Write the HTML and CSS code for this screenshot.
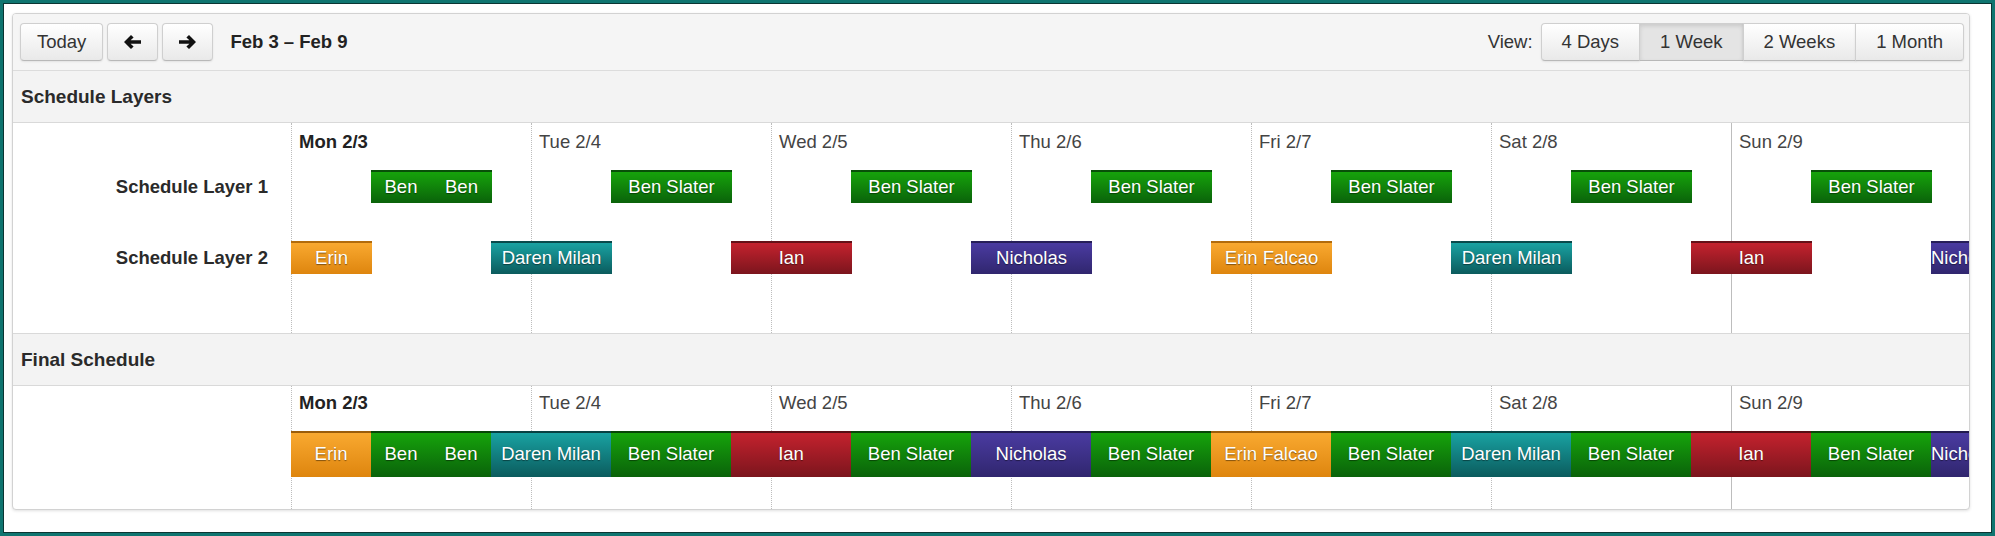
FILE: index.html
```html
<!DOCTYPE html>
<html lang="en">
<head>
<meta charset="utf-8">
<title>Schedule</title>
<link rel="stylesheet" href="styles.css">
</head>
<body>
<div class="frame">
  <div class="panel">
    <div class="toolbar">
      <div class="tb-left">
        <button class="btn btn-today">Today</button>
        <button class="btn btn-icon" aria-label="Previous">
          <svg width="17" height="14" viewBox="0 0 17 14"><path d="M0 7 L7 0 L9.6 2.6 L6.6 5.3 H17 V8.7 H6.6 L9.6 11.4 L7 14 Z" fill="#111"/></svg>
        </button>
        <button class="btn btn-icon" aria-label="Next">
          <svg width="17" height="14" viewBox="0 0 17 14"><path d="M17 7 L10 0 L7.4 2.6 L10.4 5.3 H0 V8.7 H10.4 L7.4 11.4 L10 14 Z" fill="#111"/></svg>
        </button>
        <span class="range">Feb 3 – Feb 9</span>
      </div>
      <div class="tb-right">
        <span class="view-label">View:</span>
        <div class="btn-group">
          <button class="btn">4 Days</button>
          <button class="btn active">1 Week</button>
          <button class="btn">2 Weeks</button>
          <button class="btn">1 Month</button>
        </div>
      </div>
    </div>

    <div class="section-head">Schedule Layers</div>
    <div class="sched sched-layers">
      <div class="labels">
        <div class="labels-head"></div>
        <div class="row-label">Schedule Layer 1</div>
        <div class="row-label">Schedule Layer 2</div>
      </div>
      <div class="timeline">
        <div class="days">
          <div class="day today">Mon 2/3</div>
          <div class="day">Tue 2/4</div>
          <div class="day">Wed 2/5</div>
          <div class="day">Thu 2/6</div>
          <div class="day">Fri 2/7</div>
          <div class="day">Sat 2/8</div>
          <div class="day now">Sun 2/9</div>
        </div>
        <div class="tracks">
          <div class="track">
            <div class="bar green" style="left:80px;width:60px">Ben</div>
            <div class="bar green" style="left:140px;width:61px">Ben</div>
            <div class="bar green" style="left:320px;width:121px">Ben Slater</div>
            <div class="bar green" style="left:560px;width:121px">Ben Slater</div>
            <div class="bar green" style="left:800px;width:121px">Ben Slater</div>
            <div class="bar green" style="left:1040px;width:121px">Ben Slater</div>
            <div class="bar green" style="left:1280px;width:121px">Ben Slater</div>
            <div class="bar green" style="left:1520px;width:121px">Ben Slater</div>
          </div>
          <div class="track">
            <div class="bar orange" style="left:0px;width:81px">Erin</div>
            <div class="bar teal" style="left:200px;width:121px">Daren Milan</div>
            <div class="bar red" style="left:440px;width:121px">Ian</div>
            <div class="bar purple" style="left:680px;width:121px">Nicholas</div>
            <div class="bar orange" style="left:920px;width:121px">Erin Falcao</div>
            <div class="bar teal" style="left:1160px;width:121px">Daren Milan</div>
            <div class="bar red" style="left:1400px;width:121px">Ian</div>
            <div class="bar purple" style="left:1640px;width:40px">Nicholas</div>
          </div>
        </div>
      </div>
    </div>

    <div class="section-head section-head-2">Final Schedule</div>
    <div class="sched sched-final">
      <div class="labels">
        <div class="labels-head"></div>
      </div>
      <div class="timeline">
        <div class="days">
          <div class="day today">Mon 2/3</div>
          <div class="day">Tue 2/4</div>
          <div class="day">Wed 2/5</div>
          <div class="day">Thu 2/6</div>
          <div class="day">Fri 2/7</div>
          <div class="day">Sat 2/8</div>
          <div class="day now">Sun 2/9</div>
        </div>
        <div class="tracks">
          <div class="track track-final">
            <div class="bar orange" style="left:0px;width:80px">Erin</div>
            <div class="bar green" style="left:80px;width:60px">Ben</div>
            <div class="bar green" style="left:140px;width:60px">Ben</div>
            <div class="bar teal" style="left:200px;width:120px">Daren Milan</div>
            <div class="bar green" style="left:320px;width:120px">Ben Slater</div>
            <div class="bar red" style="left:440px;width:120px">Ian</div>
            <div class="bar green" style="left:560px;width:120px">Ben Slater</div>
            <div class="bar purple" style="left:680px;width:120px">Nicholas</div>
            <div class="bar green" style="left:800px;width:120px">Ben Slater</div>
            <div class="bar orange" style="left:920px;width:120px">Erin Falcao</div>
            <div class="bar green" style="left:1040px;width:120px">Ben Slater</div>
            <div class="bar teal" style="left:1160px;width:120px">Daren Milan</div>
            <div class="bar green" style="left:1280px;width:120px">Ben Slater</div>
            <div class="bar red" style="left:1400px;width:120px">Ian</div>
            <div class="bar green" style="left:1520px;width:120px">Ben Slater</div>
            <div class="bar purple" style="left:1640px;width:40px">Nicholas</div>
          </div>
        </div>
      </div>
    </div>
  </div>
</div>
</body>
</html>
```

FILE: styles.css
```css
* { box-sizing: border-box; }

html, body {
  margin: 0;
  padding: 0;
  background: #ffffff;
}

body {
  font-family: "Liberation Sans", Arial, Helvetica, sans-serif;
  font-size: 18.5px;
  color: #333333;
}

.frame {
  width: 1995px;
  height: 536px;
  border: 3px solid #0f7570;
  box-shadow: inset 0 0 0 1px #0b3533;
  background: #ffffff;
  padding: 10px 0 0 9px;
  overflow: hidden;
}

.panel {
  width: 1958px;
  border: 1px solid #d2d2d2;
  border-radius: 4px;
  background: #ffffff;
  box-shadow: 0 1px 3px rgba(0, 0, 0, 0.12);
  overflow: hidden;
}

/* toolbar */
.toolbar {
  display: flex;
  align-items: center;
  justify-content: space-between;
  padding: 9px 5px 9px 7px;
  background: #f5f5f5;
  border-bottom: 1px solid #dcdcdc;
}

.tb-left, .tb-right {
  display: flex;
  align-items: center;
}

.tb-left { gap: 4px; }

.btn {
  height: 38px;
  margin: 0;
  padding: 0 20px;
  font-family: inherit;
  font-size: 18.5px;
  line-height: 36px;
  color: #333333;
  background: linear-gradient(#ffffff, #e9e9e9);
  border: 1px solid #cfcfcf;
  border-bottom-color: #b8b8b8;
  border-radius: 4px;
  box-shadow: inset 0 1px 0 rgba(255, 255, 255, 0.4), 0 1px 2px rgba(0, 0, 0, 0.08);
  display: flex;
  align-items: center;
  justify-content: center;
  cursor: pointer;
}

.btn-today { padding: 0 16px; }

.btn-icon {
  width: 51px;
  padding: 0;
}

.range {
  margin-left: 13px;
  font-weight: bold;
  font-size: 18.5px;
  color: #222222;
}

.view-label {
  margin-right: 8px;
  color: #333333;
}

.btn-group { display: flex; }

.btn-group .btn {
  border-radius: 0;
  margin-left: -1px;
}

.btn-group .btn:first-child {
  margin-left: 0;
  border-radius: 4px 0 0 4px;
}

.btn-group .btn:last-child {
  border-radius: 0 4px 4px 0;
}

.btn-group .btn.active {
  background: #e4e4e4;
  box-shadow: inset 0 2px 4px rgba(0, 0, 0, 0.12);
}

/* section headers */
.section-head {
  height: 52px;
  padding-left: 8px;
  display: flex;
  align-items: center;
  background: #f3f3f3;
  border-bottom: 1px solid #d9d9d9;
  font-weight: bold;
  font-size: 19px;
  color: #2a2a2a;
}

.section-head-2 {
  height: 53px;
  border-top: 1px solid #d9d9d9;
}

/* schedule bodies */
.sched {
  display: flex;
}

.sched-layers { height: 210px; }
.sched-final { height: 123px; }

.labels {
  width: 278px;
  flex: none;
}

.labels-head { height: 37px; }

.row-label {
  height: 71px;
  padding: 10px 23px 28px 0;
  display: flex;
  align-items: center;
  justify-content: flex-end;
  font-weight: bold;
  font-size: 18.5px;
  color: #2a2a2a;
  white-space: nowrap;
}

.timeline {
  position: relative;
  flex: 1;
  overflow: hidden;
}

.days {
  position: absolute;
  top: 0;
  bottom: 0;
  left: 0;
  display: grid;
  grid-template-columns: repeat(7, 240px);
}

.day {
  border-left: 1px dotted #bdbdbd;
  padding: 8px 0 0 7px;
  line-height: 22px;
  color: #444444;
  white-space: nowrap;
}

.sched-final .day { padding-top: 6px; }

.day.today {
  font-weight: bold;
  color: #222222;
}

.day.now {
  border-left: 1px solid #bdbdbd;
}

.tracks {
  position: relative;
  padding-top: 37px;
}

.track {
  position: relative;
  height: 71px;
}

.track-final { height: 86px; }

.bar {
  position: absolute;
  top: 10px;
  height: 33px;
  border-top: 2px solid rgba(0, 0, 0, 0.2);
  color: #ffffff;
  font-size: 18.5px;
  line-height: 30px;
  text-align: center;
  white-space: nowrap;
  overflow: hidden;
  text-shadow: 0 1px 1px rgba(0, 0, 0, 0.45);
}

.track-final .bar {
  top: 8px;
  height: 46px;
  line-height: 42px;
  border-top: 2px solid rgba(0, 0, 0, 0.3);
}

.green  { background: linear-gradient(#16a30b, #0a620a); }
.orange { background: linear-gradient(#f9a930, #de850e); }
.teal   { background: linear-gradient(#19a2a2, #0b5b5d); }
.red    { background: linear-gradient(#c4222e, #7b151d); }
.purple { background: linear-gradient(#4a3ba1, #30266e); }
```
